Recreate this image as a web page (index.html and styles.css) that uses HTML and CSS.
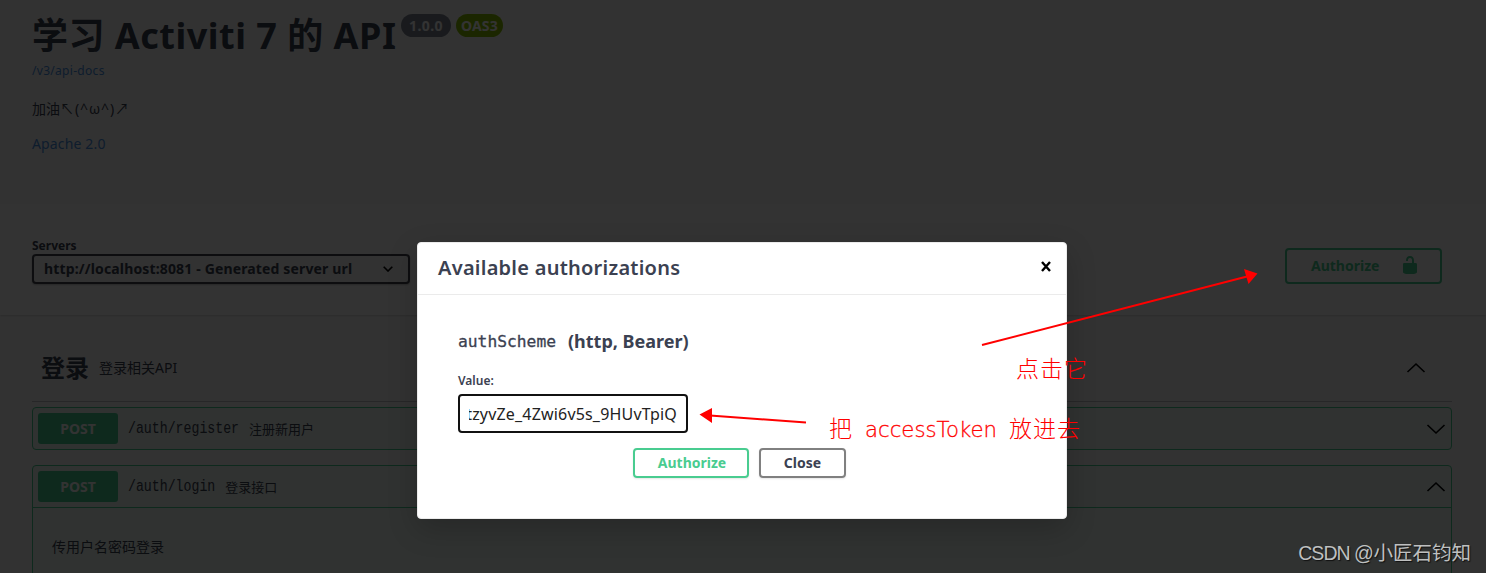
FILE: index.html
```html
<!DOCTYPE html>
<html lang="zh">
<head>
<meta charset="utf-8">
<title>学习 Activiti 7 的 API</title>
<link rel="stylesheet" href="styles.css">
</head>
<body>
<main class="page">
  <section class="info">
    <div class="title-row">
      <h1 class="title">学习 Activiti 7 的 API</h1>
      <span class="badge badge-version">1.0.0</span>
      <span class="badge badge-oas">OAS3</span>
    </div>
    <a class="docs-link">/v3/api-docs</a>
    <p class="description">加油<span class="face">↖(^ω^)↗</span></p>
    <a class="license">Apache 2.0</a>
  </section>
  <section class="schemes">
    <div class="servers">
      <span class="servers-label">Servers</span>
      <div class="select"><span class="select-text">http://localhost:8081 - Generated server url</span>
        <svg class="select-arrow" width="10" height="6" viewBox="0 0 10 6"><path d="M.7.7 5 5 9.3.7" fill="none" stroke="#000" stroke-width="1.6"/></svg>
      </div>
    </div>
    <div class="authorize"><span class="authorize-text">Authorize</span>
      <svg class="lock" width="20" height="20" viewBox="0 0 20 20"><path fill="#49cc90" d="M15.8 8H14V5.6C14 2.703 12.665 1 10 1 7.334 1 6 2.703 6 5.6V6h2v-.801C8 3.754 8.797 3 10 3c1.203 0 2 .754 2 2.199V8H4c-.553 0-1 .646-1 1.199V17c0 .549.428 1.139.951 1.307l1.197.387C5.672 18.861 6.55 19 7.1 19h5.8c.549 0 1.428-.139 1.951-.307l1.196-.387c.524-.167.953-.757.953-1.306V9.199C17 8.646 16.352 8 15.8 8z"/></svg>
    </div>
  </section>
  <section class="operations">
    <div class="tag"><h2 class="tag-name">登录</h2><span class="tag-desc">登录相关API</span>
      <svg class="chevron" width="20" height="12" viewBox="0 0 20 12"><path d="m1.5 10 8.500-8 8.500 8" fill="none" stroke="#000" stroke-width="1.600"/></svg></div>
    <div class="op">
      <div class="summary"><span class="method">POST</span><span class="path">/auth/register</span><span class="op-desc">注册新用户</span>
        <svg class="chevron" width="20" height="12" viewBox="0 0 20 12"><path d="m1.500 2 8.500 8 8.500-8" fill="none" stroke="#000" stroke-width="1.600"/></svg></div>
    </div>
    <div class="op op-open">
      <div class="summary"><span class="method">POST</span><span class="path">/auth/login</span><span class="op-desc">登录接口</span>
        <svg class="chevron" width="20" height="12" viewBox="0 0 20 12"><path d="m1.500 10 8.500-8 8.500 8" fill="none" stroke="#000" stroke-width="1.600"/></svg></div>
      <p class="op-body">传用户名密码登录</p>
    </div>
  </section>
</main>
<div class="backdrop"></div>
<div class="modal">
  <header class="modal-head"><h3 class="modal-title">Available authorizations</h3>
    <svg width="10" height="11" viewBox="0 0 10 11"><path d="m1 1 8 9M9 1 1 10" stroke="#000" stroke-width="2.400"/></svg></header>
  <div class="modal-body">
    <h4 class="scheme"><span class="scheme-name">authScheme</span><span class="scheme-type">(http, Bearer)</span></h4>
    <label class="value-label">Value:</label>
    <div class="field"><span class="field-text">tzyvZe_4Zwi6v5s_9HUvTpiQ</span></div>
    <div class="buttons"><span class="btn btn-auth">Authorize</span><span class="btn btn-close">Close</span></div>
  </div>
</div>
<svg class="annotations" width="1486" height="573" viewBox="0 0 1486 573">
  <g stroke="#f00" stroke-width="2" fill="none"><path d="M982 345 1247 276.500M806 422.500 710 415.500"/></g>
  <path fill="#f00" d="M1257.500 273.500 1244 269l4.500 15zM699.500 414.500 712 408v15z"/>
  <text class="note" x="1016" y="377" textLength="71">点击它</text>
  <text class="note" x="829" y="437" textLength="24">把</text>
  <text class="note note-latin" x="865" y="437" textLength="132" lengthAdjust="spacingAndGlyphs">accessToken</text>
  <text class="note" x="1009" y="437" textLength="71">放进去</text>
</svg>
<div class="watermark"><span class="watermark-site">CSDN @</span>小匠石钧知</div>
</body>
</html>
```
FILE: styles.css
```css
* { box-sizing: border-box; }
body { margin: 0; width: 1486px; height: 573px; overflow: hidden; position: relative; background: #fafafa; color: #3b4151; font-family: "Noto Sans", "Noto Sans CJK SC", sans-serif; }
h1, h2, h3, h4, p { margin: 0; }
svg { display: block; flex: none; }
span, a, p, h1, h2, h3, h4 { white-space: nowrap; }
.page { height: 573px; overflow: hidden; }
.info { height: 204px; padding: 12px 32px 0; display: flex; flex-direction: column; }
.title-row { display: flex; align-items: flex-start; height: 48px; }
.title { font-size: 36px; line-height: 48px; letter-spacing: .5px; width: 369px; }
.badge { margin-top: 2px; height: 23px; border-radius: 12px; color: #fff; font-size: 14px; line-height: 23px; font-weight: 700; text-align: center; }
.badge-version { width: 50px; background: #7d8492; letter-spacing: .4px; }
.badge-oas { width: 47px; margin-left: 5px; background: #89bf04; letter-spacing: .2px; }
.docs-link { margin-top: 2px; font-size: 12px; line-height: 18px; letter-spacing: .3px; color: #4990e2; }
.description { margin-top: 19px; font-size: 14px; line-height: 20px; }
.face { letter-spacing: .9px; }
.license { margin-top: 15px; font-size: 14px; line-height: 20px; letter-spacing: .15px; color: #4990e2; }
.schemes { height: 111px; padding: 34px 44px 0 32px; display: flex; justify-content: space-between; background: #fff; box-shadow: 0 1px 2px rgba(0,0,0,.15); }
.servers { display: flex; flex-direction: column; }
.servers-label { font-size: 12px; line-height: 15px; height: 16px; font-weight: 700; }
.select { width: 378px; height: 30px; padding: 0 15px 0 10px; display: flex; align-items: center; justify-content: space-between; border: 2px solid #41444e; border-radius: 4px; background: #f7f7f7; box-shadow: 0 1px 2px rgba(0,0,0,.25); }
.select-text { font-size: 14px; line-height: 26px; font-weight: 700; letter-spacing: .15px; }
.authorize { width: 157px; height: 36px; margin-top: 10px; padding: 0 20px 2px 24px; border: 2px solid #49cc90; border-radius: 4px; display: flex; align-items: center; justify-content: space-between; color: #49cc90; font-size: 14px; font-weight: 700; }
.operations { padding: 20px 34px 0 32px; }
.tag { height: 67px; padding: 0 26px 0 9px; display: flex; align-items: center; border-bottom: 1px solid rgba(59,65,81,.3); }
.tag-name { font-size: 24px; line-height: 36px; width: 58px; }
.tag-desc { font-size: 14px; line-height: 20px; }
.chevron { margin-left: auto; }
.op { margin-top: 5px; border: 1px solid #49cc90; border-radius: 4px; background: #edf9f3; }
.summary { height: 41px; padding: 0 5px; display: flex; align-items: center; }
.op-open { margin-top: 15px; height: 140px; }
.op-open .summary { height: 42px; border-bottom: 1px solid #49cc90; }
.method { width: 80px; height: 31px; border-radius: 3px; background: #49cc90; color: #fff; font-size: 14px; line-height: 31px; font-weight: 700; text-align: center; }
.path { margin-left: 10px; font-family: "Liberation Mono", monospace; font-size: 13.220px; transform: scaleY(1.280); }
.op-desc { margin-left: 10px; font-size: 13px; }
.op-body { padding: 29px 19px; font-size: 14px; line-height: 20px; }
.backdrop { position: absolute; inset: 0; background: rgba(0,0,0,.8); }
.modal { position: absolute; left: 417px; top: 242px; width: 650px; height: 277px; background: #fff; border: 1px solid #ebebeb; border-radius: 4px; box-shadow: 0 10px 30px rgba(0,0,0,.2); }
.modal-head { height: 52px; padding: 0 15px 4px 20px; display: flex; align-items: center; justify-content: space-between; border-bottom: 1px solid #ebebeb; }
.modal-title { padding-top: 3px; font-size: 20px; line-height: 28px; font-weight: 600; letter-spacing: .25px; }
.modal-body { padding: 32px 40px 0; }
.scheme { display: flex; align-items: center; height: 28px; font-size: 18px; }
.scheme-name { width: 110px; font-family: "DejaVu Sans Mono", monospace; font-size: 16.300px; font-weight: 400; -webkit-text-stroke: .3px #3b4151; }
.value-label { display: block; margin-top: 17px; font-size: 12px; line-height: 18px; font-weight: 600; }
.field { width: 230px; height: 39px; margin-top: 4px; padding: 0 9px; border: 2px solid #111; border-radius: 4px; display: flex; align-items: center; overflow: hidden; }
.field-text { width: 100%; overflow: hidden; display: flex; justify-content: flex-end; font-size: 16px; letter-spacing: .18px; color: #222; }
.buttons { display: flex; gap: 10px; margin: 15px 0 0 175px; }
.btn { height: 30px; border: 2px solid gray; border-radius: 4px; text-align: center; font-size: 14px; line-height: 25px; font-weight: 700; box-shadow: 0 1px 2px rgba(0,0,0,.1); }
.btn-auth { width: 116px; padding-left: 2px; border-color: #49cc90; color: #49cc90; }
.btn-close { width: 87px; }
.annotations { position: absolute; left: 0; top: 0; }
.note { font-family: "Noto Sans CJK SC", sans-serif; font-size: 23px; font-weight: 300; fill: #f00; }
.note-latin { font-family: "DejaVu Sans", sans-serif; font-weight: 200; font-size: 22px; stroke: #f00; stroke-width: .3px; }
.watermark { position: absolute; right: 15px; top: 539px; font-family: "Liberation Sans", "Noto Sans CJK SC", sans-serif; font-size: 19.500px; line-height: 28px; color: #bfc0c0; text-shadow: 1px 1px 1px #111; white-space: nowrap; }
.watermark-site { letter-spacing: -.95px; margin-right: .5px; }
```
